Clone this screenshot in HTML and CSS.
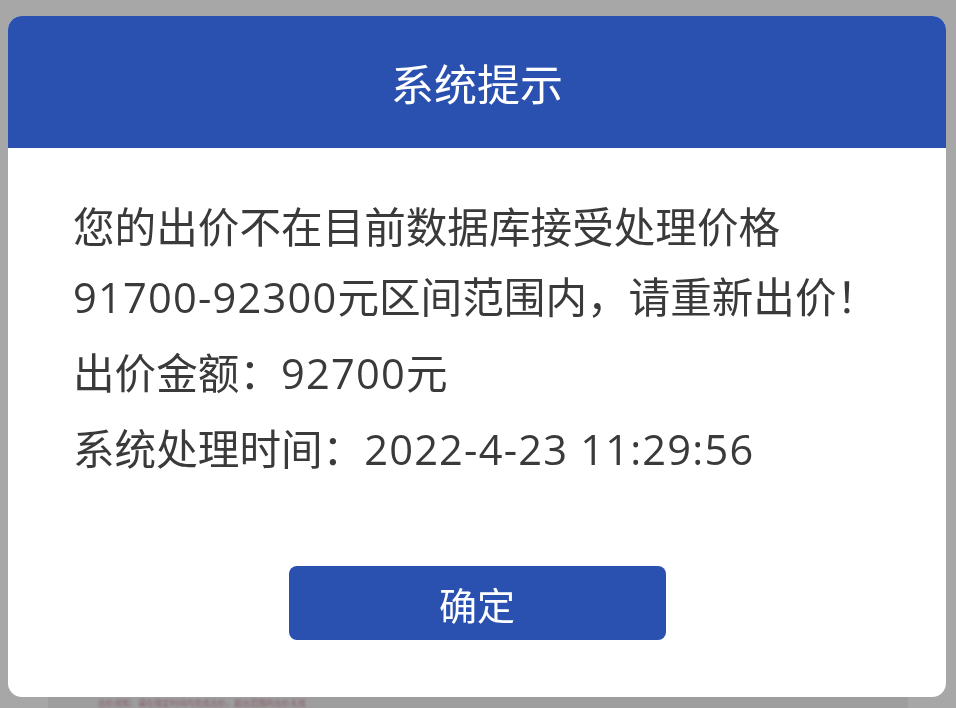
FILE: index.html
```html
<!DOCTYPE html>
<html lang="zh-CN">

<head>
  <meta charset="UTF-8">
  <meta name="viewport" content="width=device-width, initial-scale=1.0">
  <title>系统提示</title>
  <link rel="stylesheet" href="styles.css">
</head>

<body class="page">
  <!-- page content behind the dialog -->
  <div class="page-panel">
    <span class="page-text">出价须知：请在规定时间内完成出价，超出范围的出价无效</span>
  </div>

  <div class="mask">
    <div class="dialog">
      <div class="dialog-header">系统提示</div>
      <div class="dialog-body">
        <p class="msg msg-main">您的出价不在目前数据库接受处理价格<br><span class="num">91700-92300</span>元区间范围内，请重新出价！</p>
        <p class="msg">出价金额：<span class="num">92700</span>元</p>
        <p class="msg">系统处理时间：<span class="num">2022-4-23 11:29:56</span></p>
      </div>
      <div class="dialog-footer">
        <button class="btn-ok" type="button">确定</button>
      </div>
    </div>
  </div>
</body>

</html>
```

FILE: styles.css
```css
.page {
  margin: 0;
  min-height: 100vh;
  display: flex;
  flex-direction: column;
  justify-content: flex-end;
  background-color: #fafafa;
  font-family: "Open Sans", "Noto Sans CJK SC", sans-serif;
}

.page-panel {
  margin: 0 48px;
  height: 11px;
  padding-left: 50px;
  background-color: #ececec;
  overflow: hidden;
}

.page-text {
  display: block;
  font-size: 8px;
  line-height: 8px;
  margin-top: 2px;
  color: #c88a9a;
  filter: blur(0.8px);
}

.mask {
  position: fixed;
  top: 0;
  left: 0;
  right: 0;
  bottom: 0;
  padding: 16px 10px 0 8px;
  background-color: rgba(0, 0, 0, 0.33);
}

.dialog {
  background-color: #fff;
  border-radius: 14px;
  overflow: hidden;
}

.dialog-header {
  height: 132px;
  line-height: 138px;
  text-align: center;
  background-color: #2a51b0;
  color: #fff;
  font-size: 43px;
}

.dialog-body {
  padding: 44px 65px 0 65px;
  color: #3a3a3a;
  font-size: 41.6px;
}

.msg {
  margin: 0;
  line-height: 76px;
  white-space: nowrap;
}

.msg-main {
  line-height: 70px;
  margin-bottom: 3px;
}

.num {
  letter-spacing: 1.2px;
}

.dialog-footer {
  display: flex;
  justify-content: center;
  padding: 79px 0 57px 0;
}

.btn-ok {
  width: 377px;
  height: 74px;
  border: none;
  border-radius: 8px;
  background-color: #2a51b0;
  color: #fff;
  font-family: "Open Sans", "Noto Sans CJK SC", sans-serif;
  font-size: 38px;
  padding: 0;
}
```
